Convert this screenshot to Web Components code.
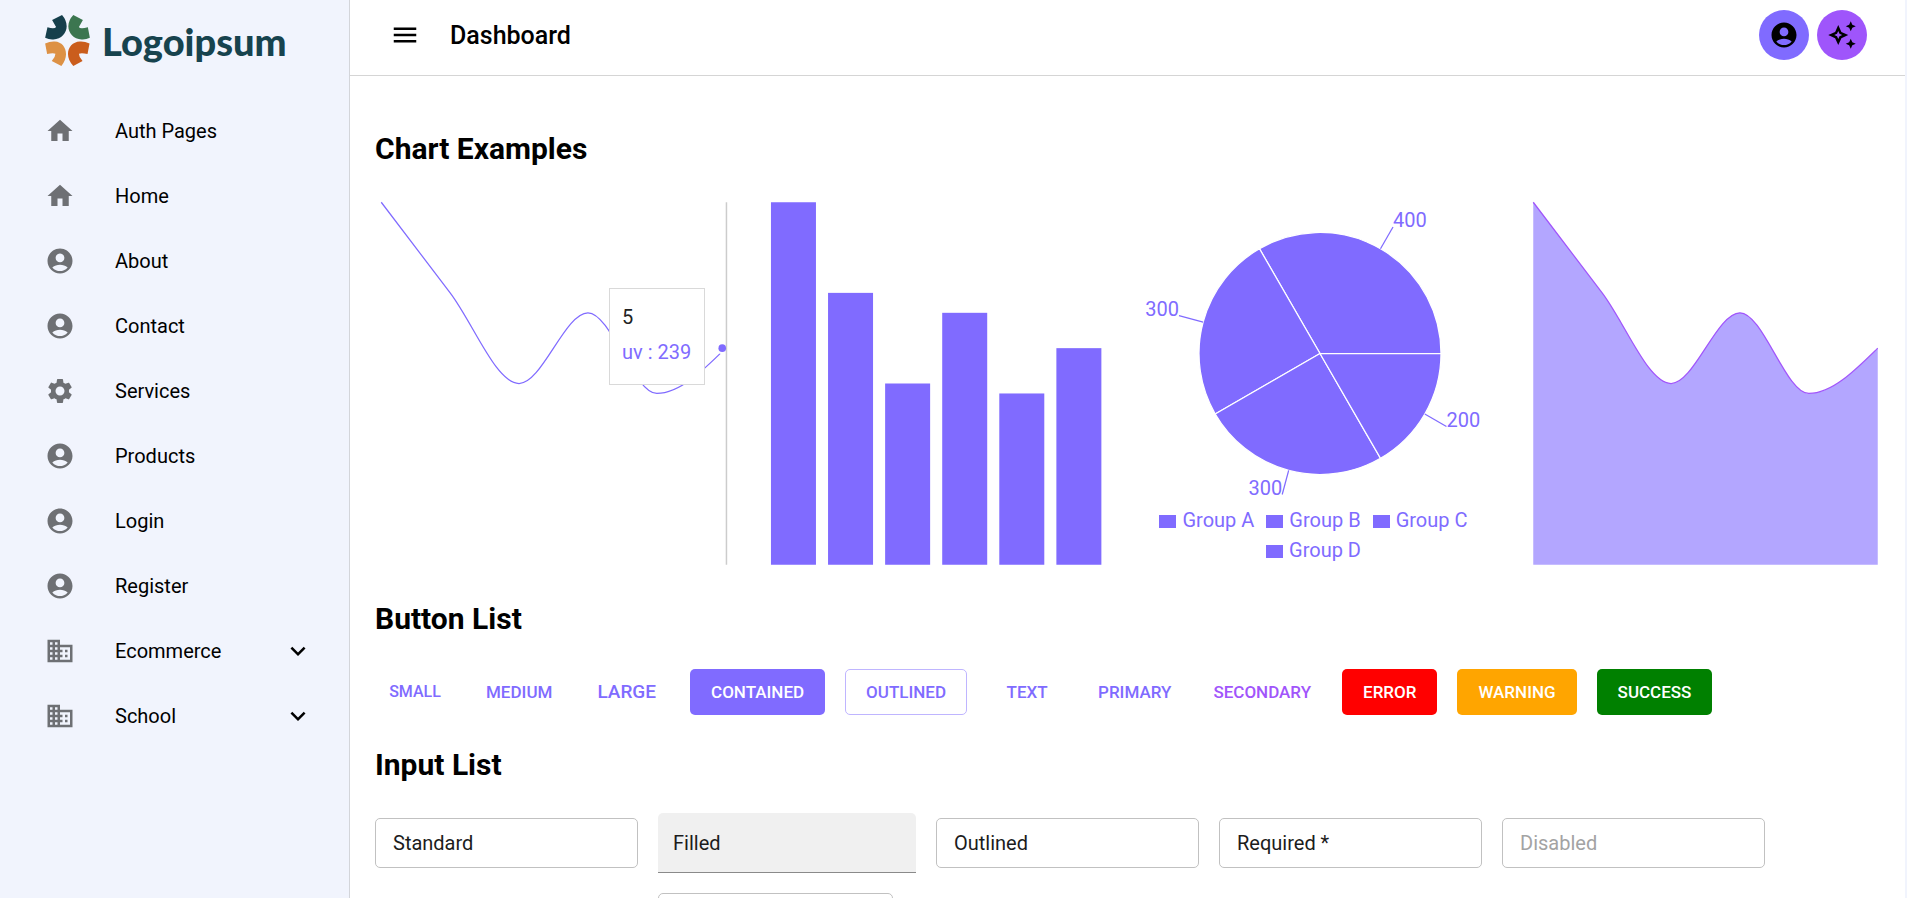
<!DOCTYPE html>
<html lang="en">
<head>
<meta charset="utf-8">
<title>Dashboard</title>
<style>
  body { margin: 0; background: #f1f4fd; color: #000; font: 400 20px/30px Roboto, sans-serif; }
</style>
</head>
<body>
<app-shell>
  <side-bar slot="side">
    <nav-item icon="home">Auth Pages</nav-item>
    <nav-item icon="home">Home</nav-item>
    <nav-item icon="account">About</nav-item>
    <nav-item icon="account">Contact</nav-item>
    <nav-item icon="settings">Services</nav-item>
    <nav-item icon="account">Products</nav-item>
    <nav-item icon="account">Login</nav-item>
    <nav-item icon="account">Register</nav-item>
    <nav-item icon="business" expandable>Ecommerce</nav-item>
    <nav-item icon="business" expandable>School</nav-item>
  </side-bar>
  <top-bar slot="top">Dashboard</top-bar>
  <page-section heading="Chart Examples" layout="charts">
    <line-chart values="400,300,200,278,189,239" active="5"></line-chart>
    <bar-chart values="400,300,200,278,189,239"></bar-chart>
    <pie-chart values="400,300,300,200" names="Group A,Group B,Group C,Group D"></pie-chart>
    <area-chart values="400,300,200,278,189,239"></area-chart>
  </page-section>
  <page-section heading="Button List" layout="row">
    <ui-button size="small">SMALL</ui-button>
    <ui-button>MEDIUM</ui-button>
    <ui-button size="large">LARGE</ui-button>
    <ui-button variant="contained">CONTAINED</ui-button>
    <ui-button variant="outlined">OUTLINED</ui-button>
    <ui-button>TEXT</ui-button>
    <ui-button>PRIMARY</ui-button>
    <ui-button tone="secondary">SECONDARY</ui-button>
    <ui-button variant="contained" tone="error">ERROR</ui-button>
    <ui-button variant="contained" tone="warning">WARNING</ui-button>
    <ui-button variant="contained" tone="success">SUCCESS</ui-button>
  </page-section>
  <page-section heading="Input List" layout="fields">
    <text-field label="Standard"></text-field>
    <text-field label="Filled" variant="filled"></text-field>
    <text-field label="Outlined"></text-field>
    <text-field label="Required *" required></text-field>
    <text-field label="Disabled" disabled></text-field>
    <text-field class="second" label=""></text-field>
  </page-section>
</app-shell>

<script>
const ICONS = {
  home: 'M10 20v-6h4v6h5v-8h3L12 3 2 12h3v8z',
  account: 'M12 2C6.48 2 2 6.48 2 12s4.48 10 10 10 10-4.48 10-10S17.52 2 12 2zm0 4c1.93 0 3.5 1.57 3.5 3.5S13.93 13 12 13s-3.5-1.57-3.5-3.5S10.07 6 12 6zm0 14c-2.03 0-4.43-.82-6.14-2.88C7.55 15.8 9.68 15 12 15s4.45.8 6.14 2.12C16.43 19.18 14.03 20 12 20z',
  settings: 'M19.14 12.94c.04-.3.06-.61.06-.94 0-.32-.02-.64-.07-.94l2.03-1.58c.18-.14.23-.41.12-.61l-1.92-3.32c-.12-.22-.37-.29-.59-.22l-2.39.96c-.5-.38-1.03-.7-1.62-.94l-.36-2.54c-.04-.24-.24-.41-.48-.41h-3.84c-.24 0-.43.17-.47.41l-.36 2.54c-.59.24-1.13.57-1.62.94l-2.39-.96c-.22-.08-.47 0-.59.22L2.74 8.87c-.12.21-.08.47.12.61l2.03 1.58c-.05.3-.09.63-.09.94s.02.64.07.94l-2.03 1.58c-.18.14-.23.41-.12.61l1.92 3.32c.12.22.37.29.59.22l2.39-.96c.5.38 1.03.7 1.62.94l.36 2.54c.05.24.24.41.48.41h3.84c.24 0 .44-.17.47-.41l.36-2.54c.59-.24 1.13-.56 1.62-.94l2.39.96c.22.08.47 0 .59-.22l1.92-3.32c.12-.22.07-.47-.12-.61l-2.01-1.58zM12 15.6c-1.98 0-3.6-1.62-3.6-3.6s1.62-3.6 3.6-3.6 3.6 1.62 3.6 3.6-1.62 3.6-3.6 3.6z',
  business: 'M12 7V3H2v18h20V7H12zM6 19H4v-2h2v2zm0-4H4v-2h2v2zm0-4H4V9h2v2zm0-4H4V5h2v2zm4 12H8v-2h2v2zm0-4H8v-2h2v2zm0-4H8V9h2v2zm0-4H8V5h2v2zm10 12h-8v-2h2v-2h-2v-2h2v-2h-2V9h8v10zm-2-8h-2v2h2v-2zm0 4h-2v2h2v-2z',
  more: 'M16.59 8.59 12 13.17 7.41 8.59 6 10l6 6 6-6z',
  menu: 'M3 18h18v-2H3v2zm0-5h18v-2H3v2zm0-7v2h18V6H3z',
  sparkle: 'm19 9 1.25-2.75L23 5l-2.75-1.25L19 1l-1.25 2.75L15 5l2.75 1.25zm0 6-1.25 2.75L15 19l2.75 1.25L19 23l1.25-2.75L23 19l-2.75-1.25zm-7.5-5.5L9 4 6.5 9.5 1 12l5.5 2.5L9 20l2.5-5.5L17 12zm-1.51 3.49L9 15.17l-.99-2.18L5.83 12l2.18-.99L9 8.83l.99 2.18 2.18.99z'
};
const icon = name => `<svg class="icon" viewBox="0 0 24 24" width="30" height="30" aria-hidden="true"><path fill="currentColor" d="${ICONS[name]}"/></svg>`;

/* Base class: attaches an open root and fills it from render(). */
class UiElement extends HTMLElement {
  constructor() { super(); this.attachShadow({ mode: 'open' }); }
  connectedCallback() {
    this.shadowRoot.innerHTML = `<style>*{box-sizing:border-box}:host{display:block}svg{display:block}</style>${this.render()}`;
  }
}

customElements.define('app-shell', class extends UiElement {
  render() { return `<style>
    :host { display: grid; grid-template-columns: 350px minmax(0, 1fr); height: 100vh; padding-right: 2px; box-sizing: border-box; }
    aside { border-right: 1px solid #d3d5da; overflow: hidden; }
    .page { background: #fff; overflow-y: auto; scrollbar-width: none; }
    main { padding: 53px 21px 30px 25px; display: grid; gap: 30px; }
  </style>
  <aside><slot name="side"></slot></aside>
  <div class="page"><slot name="top"></slot><main><slot></slot></main></div>`; }
});

customElements.define('side-bar', class extends UiElement {
  render() { return `<style>
    header { display: flex; align-items: center; gap: 12px; height: 98px; padding: 0 0 17px 45px; }
    .name { color: #17434e; font: 900 38px/44px Lato, sans-serif; }
  </style>
  <header>
    <svg viewBox="135 44 135 154" width="45" height="51" aria-hidden="true">
      <path fill="#163f4c" d="M186 44L156 59L168 80Q164 87 142 81L135 113Q147 119 160 118C184 117 200 98 200 78Q200 60 186 44Z"/>
      <path fill="#3c7650" d="M220 44L249 59L237 80Q240 87 264 81L270 113Q258 119 245 118C221 117 205 98 205 78Q205 60 220 44Z"/>
      <path fill="#dd9145" d="M135 130Q150 123 164 124C185 125 198 141 198 162Q198 181 184 198L155 183Q166 172 166 161Q159 157 141 162Z"/>
      <path fill="#ca5d1d" d="M269 130Q254 123 240 124C218 125 204 141 204 162Q204 181 220 198L248 183Q237 172 237 161Q245 157 263 162Z"/>
    </svg>
    <span class="name">Logoipsum</span>
  </header>
  <nav><slot></slot></nav>`; }
});

customElements.define('nav-item', class extends UiElement {
  render() { return `<style>
    a { display: flex; align-items: center; gap: 40px; height: 65px; padding: 0 36px 0 45px; color: inherit; text-decoration: none; }
    span { flex: 1; }
    a > .icon:first-child { color: #6e7074; }
  </style>
  <a href="#">${icon(this.getAttribute('icon'))}<span><slot></slot></span>${this.hasAttribute('expandable') ? icon('more') : ''}</a>`; }
});

customElements.define('top-bar', class extends UiElement {
  render() { return `<style>
    header { display: flex; align-items: center; gap: 8px; height: 76px; padding: 0 38px 5px 40px; border-bottom: 1px solid #d5d5d5; }
    h1 { flex: 1; margin: 0 0 0 22px; padding-top: 2px; font: 500 25px/40px Roboto, sans-serif; }
    button { border: 0; padding: 0; background: none; color: #000; }
    .round { display: grid; place-items: center; width: 50px; height: 50px; border-radius: 50%; background: #806bff; }
    .round.ai { background: #9f55fb; }
  </style>
  <header>
    <button aria-label="Toggle menu">${icon('menu')}</button>
    <h1><slot></slot></h1>
    <button class="round" aria-label="Account">${icon('account')}</button>
    <button class="round ai" aria-label="Assistant">${icon('sparkle')}</button>
  </header>`; }
});

customElements.define('page-section', class extends UiElement {
  render() { return `<style>
    h2 { margin: 0 0 30px; font: 700 30px/40px Roboto, sans-serif; }
    .charts { display: grid; grid-template-columns: repeat(4, minmax(0, 1fr)); gap: 27px; margin: -3px 0 -2px; }
    .row { display: flex; flex-wrap: wrap; align-items: center; gap: 20px; }
    .fields { display: grid; grid-template-columns: 263px 258px repeat(3, 263px); align-items: center; gap: 20px; margin-top: -2px; }
    ::slotted(.second) { grid-column: 2; width: 235px; }
  </style>
  <section><h2>${this.getAttribute('heading')}</h2><div class="${this.getAttribute('layout')}"><slot></slot></div></section>`; }
});

customElements.define('ui-button', class extends UiElement {
  render() {
    const variant = this.getAttribute('variant') || 'text', size = this.getAttribute('size') || 'medium', tone = this.getAttribute('tone') || 'primary';
    return `<style>
    button { display: block; min-width: 80px; height: 46px; padding: 0 11px; border: 0; border-radius: 5px; background: none; color: var(--tone); font: 500 17px/30px Roboto, sans-serif; }
    .primary { --tone: #806bff; } .secondary { --tone: #a155fb; } .error { --tone: #ff0000; } .warning { --tone: #ffa500; } .success { --tone: #008000; }
    .small { font-size: 16px; } .large { font-size: 19px; padding: 0 14px; }
    .contained { padding: 0 21px; background: var(--tone); color: #fff; }
    .outlined { padding: 0 20px; border: 1px solid #bfb5ff; }
  </style><button class="${variant} ${size} ${tone}"><slot></slot></button>`; }
});

customElements.define('text-field', class extends UiElement {
  render() {
    const variant = this.getAttribute('variant') || 'outlined', off = this.hasAttribute('disabled');
    return `<style>
    :host { position: relative; }
    input { display: block; width: 100%; height: 50px; padding: 0 17px; border: 1px solid #c1c1c1; border-radius: 5px; background: #fff; font: inherit; color: inherit; }
    label { position: absolute; inset: 0 18px; display: flex; align-items: center; pointer-events: none; color: #1c1c1c; }
    input.filled { height: 60px; background: #f0f0f0; border: 0; border-bottom: 1px solid #8a8a8a; border-radius: 5px 5px 0 0; padding: 0 15px; }
    .filled + label { inset: 0 15px; }
    :disabled + label { color: #a3a3a3; }
  </style><input id="field" type="text" class="${variant}" ${off ? 'disabled' : ''} ${this.hasAttribute('required') ? 'required' : ''}><label for="field">${this.getAttribute('label')}</label>`; }
});

/* Charts share one plot box, with the same margin on each side. */
const W = 357, H = 375, M = 6.25;
const numbers = el => el.getAttribute('values').split(',').map(Number);
const yScale = v => H - M - v / 400 * (H - 2 * M);
const plotPoints = values => values.map((v, i) => [M + i * (W - 2 * M) / (values.length - 1), yScale(v)]);

/* Monotone cubic interpolation through the points. */
function monotone(p) {
  const n = p.length, s = [], t = [];
  for (let i = 0; i < n - 1; i++) s[i] = (p[i + 1][1] - p[i][1]) / (p[i + 1][0] - p[i][0]);
  for (let i = 1; i < n - 1; i++) t[i] = s[i - 1] * s[i] <= 0 ? 0 : Math.sign(s[i]) * 2 * Math.min(Math.abs(s[i - 1]), Math.abs(s[i]), Math.abs(s[i - 1] + s[i]) / 4);
  t[0] = (3 * s[0] - t[1]) / 2;
  t[n - 1] = (3 * s[n - 2] - t[n - 2]) / 2;
  let d = `M${p[0]}`;
  for (let i = 0; i < n - 1; i++) {
    const h = (p[i + 1][0] - p[i][0]) / 3;
    d += `C${p[i][0] + h},${p[i][1] + h * t[i]},${p[i + 1][0] - h},${p[i + 1][1] - h * t[i + 1]},${p[i + 1]}`;
  }
  return d;
}

customElements.define('line-chart', class extends UiElement {
  render() {
    const v = numbers(this), p = plotPoints(v), a = +this.getAttribute('active'), [x, y] = p[a];
    return `<style>
    :host { position: relative; }
    svg { width: 100%; }
    .tip { position: absolute; right: 27px; top: 92px; width: 96px; padding: 11px 12px 14px; border: 1px solid #d9d9d9; background: #fff; line-height: 35px; white-space: nowrap; color: #222; }
    .tip p { margin: 0; }
    .value { color: #806bff; }
  </style>
  <svg viewBox="0 0 ${W} ${H}" role="img" aria-label="Line chart">
    <path d="${monotone(p)}" fill="none" stroke="#806bff" stroke-width="1.25"/>
    <circle cx="${x - 3.5}" cy="${y}" r="6" fill="#fff"/>
    <path d="M${x + .7} ${M}V${H - M}" stroke="#ccc" stroke-width="1.5"/>
    <circle cx="${x - 3.5}" cy="${y}" r="3.8" fill="#806bff"/>
  </svg>
  <div class="tip"><p>${a}</p><p class="value">uv : ${v[a]}</p></div>`; }
});

customElements.define('bar-chart', class extends UiElement {
  render() {
    const v = numbers(this), band = (W - 2 * M - 2) / v.length;
    return `<style>svg { width: 100%; }</style>
  <svg viewBox="0 0 ${W} ${H}" role="img" aria-label="Bar chart" fill="#806bff">${v.map((n, i) =>
    `<rect x="${M + (i + .1) * band}" y="${yScale(n)}" width="45" height="${H - M - yScale(n)}"/>`).join('')}</svg>`; }
});

customElements.define('area-chart', class extends UiElement {
  render() {
    const line = monotone(plotPoints(numbers(this)));
    return `<style>svg { width: 100%; }</style>
  <svg viewBox="0 0 ${W} ${H}" role="img" aria-label="Area chart">
    <path d="${line}V${H - M}H${M}Z" fill="#806bff" fill-opacity=".6"/>
    <path d="${line}" fill="none" stroke="#a155fb" stroke-width="1.25"/>
  </svg>`; }
});

customElements.define('pie-chart', class extends UiElement {
  render() {
    const v = numbers(this), total = v.reduce((a, b) => a + b), cx = 177, cy = 157.5, r = 121;
    const at = (deg, rad) => [cx + rad * Math.cos(deg * Math.PI / 180), cy - rad * Math.sin(deg * Math.PI / 180)];
    let start = 0, slices = '', labels = '';
    for (const n of v) {
      const sweep = n / total * 360, mid = start + sweep / 2, end = at(mid, r + 25);
      slices += `<path d="M${cx} ${cy}L${at(start, r)}A${r} ${r} 0 0 0 ${at(start + sweep, r)}Z"/>`;
      labels += `<path d="M${at(mid, r)}L${end}" stroke="#806bff" stroke-width="1.25"/><text x="${end[0]}" y="${end[1]}" text-anchor="${end[0] > cx ? 'start' : 'end'}">${n}</text>`;
      start += sweep;
    }
    return `<style>
    svg { width: 100%; }
    text { font: 20px Roboto, sans-serif; }
    ul { display: flex; flex-wrap: wrap; justify-content: center; margin: 0; padding: 0 4px 0 0; list-style: none; color: #806bff; }
    li { display: flex; align-items: center; gap: 6px; margin-right: 12px; }
    li::before { content: ""; width: 17px; height: 13px; margin-top: 2px; background: currentColor; }
  </style>
  <svg viewBox="0 0 ${W} 309" role="img" aria-label="Pie chart" fill="#806bff"><g stroke="#fff" stroke-width="1.25">${slices}</g>${labels}</svg>
  <ul>${this.getAttribute('names').split(',').map(n => `<li>${n}</li>`).join('')}</ul>`; }
});
</script>
</body>
</html>
